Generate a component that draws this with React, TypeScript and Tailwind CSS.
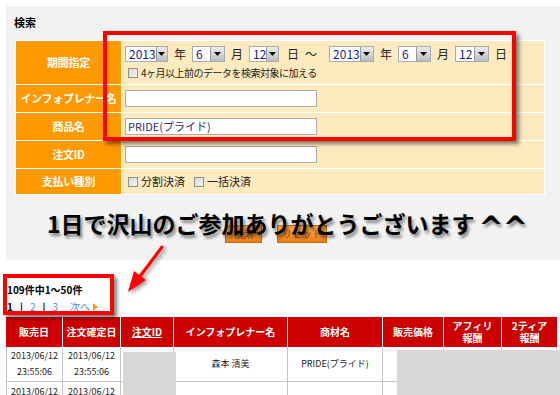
import React from 'react';

const font = 'font-["Noto_Sans_CJK_JP","Noto_Sans",sans-serif]';

function Select({ value, className }: { value: string; className: string }) {
  return (
    <span className={`inline-flex h-[16px] items-stretch border border-[#a5acb2] bg-white ${className}`}>
      <span className="flex-1 pl-[3px] text-[12px] leading-[14px] text-[#1c1c7a]">{value}</span>
      <span className="flex w-[14px] items-center justify-center border-l border-[#9a9a9a] bg-gradient-to-b from-[#ececec] to-[#bdbdbd]">
        <svg width="7" height="4" viewBox="0 0 7 4">
          <path d="M0 0h7L3.5 4z" fill="#111" />
        </svg>
      </span>
    </span>
  );
}

function Check() {
  return <span className="inline-block h-[10px] w-[10px] border border-[#8f8f8f] bg-gradient-to-br from-[#d8d8d8] to-[#f4f4f4]" />;
}

function Label({ children }: { children: React.ReactNode }) {
  return (
    <div className="flex items-center justify-center bg-[#ff9900] text-[11px] font-bold tracking-[-0.3px] text-white">
      {children}
    </div>
  );
}

function Value({ children }: { children: React.ReactNode }) {
  return <div className="flex items-center bg-[#feeabf] pl-[3px]">{children}</div>;
}

function TextBox({ value }: { value?: string }) {
  return (
    <div className="h-[17px] w-[192px] border border-[#ababab] bg-white pl-[2px] text-[11px] leading-[15px] text-[#2a2a6e]">
      {value}
    </div>
  );
}

const headers = ['販売日', '注文確定日', '注文ID', 'インフォプレナー名', '商材名', '販売価格', 'アフィリ\n報酬', '2ティア\n報酬'];

export default function App() {
  return (
    <div className={`relative h-[395px] w-[560px] overflow-hidden bg-white text-black ${font}`}>
      {/* search panel */}
      <div className="ml-[6px] mt-[6px] h-[254px] bg-[#f2f2f2] pt-[9px]">
        <div className="pl-[8px] text-[11px] font-bold leading-[14px]">検索</div>
        <div className="ml-[9px] mt-[11px] grid w-[530px] grid-cols-[105px_1fr] grid-rows-[43px_27px_27px_27px_25px] gap-px border border-white bg-white">
          <Label>期間指定</Label>
          <div className="flex flex-col justify-center gap-[5px] bg-[#feeabf] pl-[3px]">
            <div className="flex items-center gap-[6px] text-[12px] leading-[16px] text-[#222]">
              <Select value="2013" className="w-[43px]" />
              <span>年</span>
              <Select value="6" className="w-[33px]" />
              <span>月</span>
              <Select value="12" className="w-[30px]" />
              <span className="ml-[2px]">日</span>
              <span>～</span>
              <Select value="2013" className="ml-[6px] w-[45px]" />
              <span>年</span>
              <Select value="6" className="w-[33px]" />
              <span>月</span>
              <Select value="12" className="w-[34px]" />
              <span>日</span>
            </div>
            <div className="flex items-center gap-[3px] pl-[3px] text-[10px] leading-[12px] tracking-[-0.5px] text-[#222]">
              <Check />
              <span>4ヶ月以上前のデータを検索対象に加える</span>
            </div>
          </div>
          <Label>インフォプレナー名</Label>
          <Value>
            <TextBox />
          </Value>
          <Label>商品名</Label>
          <Value>
            <TextBox value="PRIDE(プライド)" />
          </Value>
          <Label>注文ID</Label>
          <Value>
            <TextBox />
          </Value>
          <Label>支払い種別</Label>
          <Value>
            <div className="flex items-center gap-[3px] pl-[3px] text-[11px] text-[#222]">
              <Check />
              <span className="mr-[6px]">分割決済</span>
              <Check />
              <span>一括決済</span>
            </div>
          </Value>
        </div>
        <div className="mt-[30px] flex gap-[15px] pl-[219px]">
          <button className="h-[18px] w-[37px] border border-[#c46a10] bg-gradient-to-b from-[#f9a544] to-[#ee7f14] text-[10px] leading-[16px] text-[#7a4a20]">
            検索
          </button>
          <button className="h-[18px] w-[50px] border border-[#c46a10] bg-gradient-to-b from-[#f9a544] to-[#ee7f14] text-[10px] leading-[16px] text-[#7a4a20]">
            リセット
          </button>
        </div>
      </div>

      {/* results */}
      <div className="pt-[24px]">
        <div className="pl-[7px] text-[10px] font-bold leading-[12px]">109件中1～50件</div>
        <div className="mt-[5px] flex items-center pl-[7px] text-[10px] leading-[12px]">
          <span className="font-bold">1</span>
          <span className="mx-[7px] font-bold">|</span>
          <span className="text-[#3d8fe0]">2</span>
          <span className="mx-[7px] font-bold">|</span>
          <span className="text-[#3d8fe0]">3</span>
          <span className="ml-[12px] text-[#3d8fe0]">次へ</span>
          <svg className="ml-[3px]" width="5" height="8" viewBox="0 0 5 8">
            <path d="M0 0l5 4-5 4z" fill="#f39a1e" />
          </svg>
        </div>
        <div className="ml-[6px] mt-[4px] grid w-[551px] grid-cols-[57px_58px_53px_114px_95px_61px_58px_55px] grid-rows-[30px_35px_35px]">
          {headers.map((h, i) => (
            <div
              key={h}
              className={`flex items-center justify-center whitespace-pre-line bg-[#cc0000] text-center text-[10px] font-bold leading-[12px] text-white ${
                i < headers.length - 1 ? 'border-r border-white' : ''
              } ${h === '注文ID' ? 'underline' : ''}`}
            >
              {h}
            </div>
          ))}
          {[0, 1].map((r) =>
            headers.map((h, i) => {
              let content = '';
              if (i < 2) content = '2013/06/12\n23:55:06';
              if (r === 0 && i === 3) content = '森本 清美';
              if (r === 0 && i === 4) content = 'PRIDE(プライド)';
              return (
                <div
                  key={`${r}-${h}`}
                  className={`flex items-center justify-center whitespace-pre-line border-b border-r border-[#c4c4c4] text-center text-[9px] leading-[16px] text-[#222] ${
                    i === 0 ? 'border-l' : ''
                  } ${r === 1 ? 'items-start pt-[2px]' : ''}`}
                >
                  {content}
                </div>
              );
            })
          )}
        </div>
      </div>

      {/* redactions */}
      <div className="absolute left-[123px] top-[352px] h-[50px] w-[53px] bg-[#d7d7d7]" />
      <div className="absolute left-[397px] top-[350px] h-[50px] w-[170px] bg-[#d7d7d7]" />

      {/* annotation boxes */}
      <div className="absolute left-[103px] top-[31px] h-[110px] w-[413px] border-4 border-[#ff0000] shadow-[3px_3px_4px_rgba(0,0,0,0.5)]" />
      <div className="absolute left-[3px] top-[274px] h-[41px] w-[111px] border-4 border-[#ff0000] shadow-[3px_3px_4px_rgba(0,0,0,0.5)]" />

      {/* arrow */}
      <svg className="absolute left-0 top-0" width="560" height="395" style={{ filter: 'drop-shadow(2px 2px 2px rgba(0,0,0,0.45))' }}>
        <line x1="162" y1="247" x2="138" y2="279" stroke="#ff0000" strokeWidth="3" strokeLinecap="round" />
        <path d="M128 292L134 271L146 280z" fill="#ff0000" />
      </svg>

      {/* message */}
      <div className="absolute left-[47px] top-[212px] flex items-start whitespace-nowrap text-[23px] font-bold leading-[23px] text-black [text-shadow:2px_3px_3px_rgba(0,0,0,0.45)]">
        <span>1日で沢山のご参加ありがとうございます</span>
        <span className='ml-[4px] mt-[1px] font-["DejaVu_Sans",sans-serif] text-[30px] leading-[30px] tracking-[-1px]'>^^</span>
      </div>
    </div>
  );
}
